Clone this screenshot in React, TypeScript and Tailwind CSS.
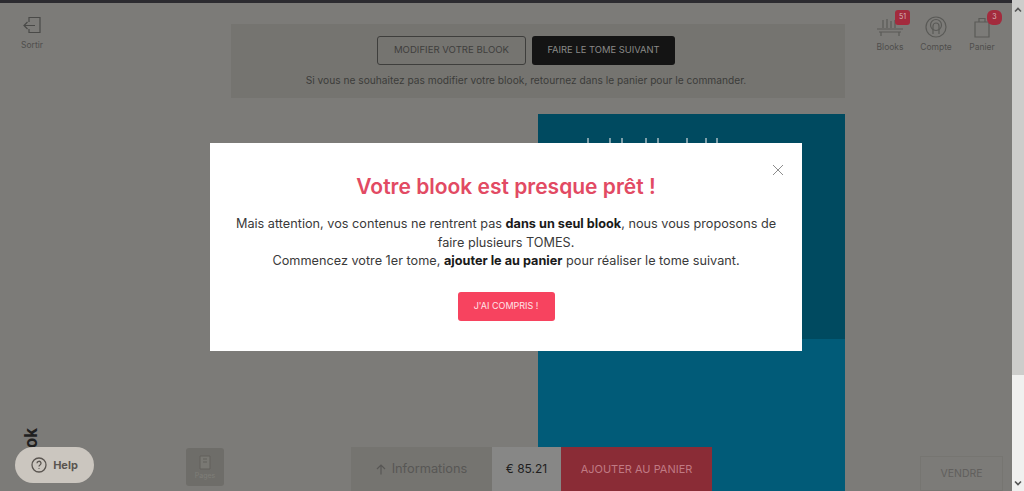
const font = { fontFamily: '"Inter", "Open Sans", sans-serif' };

function NavItem({ label, badge, round, children }: { label: string; badge: string | null; round?: boolean; children: React.ReactNode }) {
  return (
    <div className="relative flex w-[40px] flex-col items-center">
      <div className="flex h-[24px] items-center justify-center">{children}</div>
      <span className="mt-[3px] text-[8.5px] leading-[10px] text-[#4f4e4c]">{label}</span>
      {badge && (
        <span
          className={`absolute top-[-5px] right-[0px] flex h-[15px] w-[15px] items-center justify-center bg-[#a32b3d] text-[7px] text-[#d8b6ba] ${
            round ? "rounded-[6px]" : "rounded-[3px]"
          }`}
        >
          {badge}
        </span>
      )}
    </div>
  );
}

export default function App() {
  return (
    <div className="relative flex h-[491px] w-[1024px] overflow-hidden bg-[#7c7b78]" style={font}>
      <div className="flex min-w-0 flex-1 flex-col">
        <div className="h-[3px] bg-[#2c2b30]" />

        <div className="flex flex-1 flex-col">
          {/* Header */}
          <div className="flex items-start">
            <div className="flex w-[231px] pt-[13px] pl-[21px]">
              <div className="flex w-[22px] flex-col items-center">
                <svg width="22" height="20" viewBox="0 0 22 20" fill="none" stroke="#4a4a48" strokeWidth="1.2">
                  <path d="M8 6V1.5h11v15H8V13" />
                  <path d="M14 9.5H3M6.5 6 3 9.5 6.5 13" />
                </svg>
                <span className="mt-[4px] text-[8.5px] leading-[10px] text-[#4f4e4c]">Sortir</span>
              </div>
            </div>

            <div className="mt-[21px] flex h-[74px] w-[614px] flex-col items-center bg-[#757470] pt-[12px] pr-[24px]">
              <div className="flex gap-[6px]">
                <div className="flex h-[29px] w-[149px] items-center justify-center rounded-[3px] border border-[#3e3e3c] text-[9.6px] text-[#3f3e3d]">
                  MODIFIER VOTRE BLOOK
                </div>
                <div className="flex h-[29px] w-[143px] items-center justify-center rounded-[3px] bg-[#141414] text-[9.4px] text-[#8a8a88]">
                  FAIRE LE TOME SUIVANT
                </div>
              </div>
              <p className="mt-[9px] text-[10.2px] leading-[12px] text-[#3c3c3a]">
                Si vous ne souhaitez pas modifier votre blook, retournez dans le panier pour le commander.
              </p>
            </div>

            <div className="flex flex-1 justify-end gap-[6px] pt-[12px] pr-[10px]">
              <NavItem label="Blooks" badge="51">
                <svg width="28" height="22" viewBox="0 0 28 22" fill="none" stroke="#5a5a57" strokeWidth="1.2">
                  <path d="M1 13h26M3 16h22M5 16v4M23 16v4" />
                  <path d="M7 12V4M11 12V3M15 12V5M19 12V4" />
                </svg>
              </NavItem>
              <NavItem label="Compte" badge={null}>
                <svg width="22" height="22" viewBox="0 0 22 22" fill="none" stroke="#5a5a57" strokeWidth="1.2">
                  <circle cx="11" cy="11" r="10" />
                  <path d="M8 18V10a3 3 0 0 1 6 0v8" />
                  <circle cx="11" cy="9" r="5.5" />
                </svg>
              </NavItem>
              <NavItem label="Panier" badge="3" round>
                <svg width="18" height="22" viewBox="0 0 18 22" fill="none" stroke="#5a5a57" strokeWidth="1.2">
                  <path d="M2 6h14v15H2zM6 6V2.5h6V6" />
                </svg>
              </NavItem>
            </div>
          </div>

          {/* Book preview */}
          <div className="mt-[16px] ml-[538px] flex w-[307px] flex-1 flex-col">
            <div className="flex h-[225px] items-start bg-[#004a60] pt-[24px] pl-[49px]">
              <div className="h-[5px] w-[2px] bg-[#7fa0aa]" />
              <div className="ml-[20px] h-[5px] w-[2px] bg-[#7fa0aa]" />
              <div className="ml-[10px] h-[5px] w-[2px] bg-[#7fa0aa]" />
              <div className="ml-[22px] h-[5px] w-[2px] bg-[#7fa0aa]" />
              <div className="ml-[10px] h-[5px] w-[2px] bg-[#7fa0aa]" />
              <div className="ml-[27px] h-[5px] w-[2px] bg-[#7fa0aa]" />
              <div className="ml-[17px] h-[5px] w-[2px] bg-[#7fa0aa]" />
              <div className="ml-[9px] h-[5px] w-[2px] bg-[#7fa0aa]" />
            </div>
            <div className="flex-1 bg-[#015b78]" />
          </div>
        </div>
      </div>

      {/* Scrollbar */}
      <div className="flex w-[12px] flex-col justify-between bg-[#f0f0ef]">
        <div className="flex h-[375px] flex-col bg-[#cdcdcb] pt-[6px]">
          <svg width="12" height="8" viewBox="0 0 12 8" fill="none" stroke="#555" strokeWidth="1.6">
            <path d="M3 5.5 6 2.5l3 3" />
          </svg>
        </div>
        <svg className="mb-[4px]" width="12" height="8" viewBox="0 0 12 8" fill="none" stroke="#555" strokeWidth="1.6">
          <path d="M3 2.5 6 5.5l3-3" />
        </svg>
      </div>

      {/* Bottom items */}
      <span className="absolute top-[429px] left-[21px] rotate-[-90deg] text-[17px] leading-[18px] font-bold text-[#20201f]">
        ok
      </span>
      <div className="absolute top-[447px] left-[15px] flex h-[36px] w-[79px] items-center justify-center gap-[6px] rounded-full bg-[#cbc6bf] text-[11px] font-bold text-[#5a5550]">
        <svg width="16" height="16" viewBox="0 0 16 16" fill="none" stroke="#5a5550" strokeWidth="1.3">
          <circle cx="8" cy="8" r="7" />
          <path d="M6 6.3a2 2 0 1 1 3 1.7c-.7.4-1 .8-1 1.6M8 11.3v.8" />
        </svg>
        Help
      </div>
      <div className="absolute top-[448px] left-[186px] flex h-[38px] w-[38px] flex-col items-center justify-center rounded-[3px] bg-[#6e6d69]">
        <svg width="18" height="18" viewBox="0 0 18 18" fill="#797873" stroke="#62615d">
          <path d="M4 2h10v13H4zM7 5h4M7 8h4" />
        </svg>
        <span className="text-[7px] leading-[8px] text-[#7e7d78]">Pages</span>
      </div>

      <div className="absolute top-[447px] left-[351px] flex h-[44px] w-[361px]">
        <div className="flex w-[141px] items-center justify-center gap-[6px] bg-[#757470] text-[12.8px] text-[#585755]">
          <svg width="10" height="11" viewBox="0 0 10 11" fill="none" stroke="#585755" strokeWidth="1.2">
            <path d="M5 10.5V1M1 5l4-4 4 4" />
          </svg>
          Informations
        </div>
        <div className="flex w-[69px] items-center justify-center bg-[#878786] text-[12px] text-[#1e1e1e]">€ 85.21</div>
        <div className="flex flex-1 items-center justify-center bg-[#8a2c36] text-[11px] text-[#c07a84]">
          AJOUTER AU PANIER
        </div>
      </div>

      <div className="absolute top-[456px] left-[920px] flex h-[35px] w-[83px] items-center justify-center border border-[#767571] text-[10.5px] text-[#615f5d]">
        VENDRE
      </div>

      {/* Modal */}
      <div className="absolute top-[143px] left-[210px] flex h-[208px] w-[592px] flex-col items-center bg-white pt-[31px]">
        <svg className="absolute top-[21px] right-[18px]" width="12" height="12" viewBox="0 0 12 12" fill="none" stroke="#8d8d8d" strokeWidth="1">
          <path d="M1 1l10 10M11 1 1 11" />
        </svg>
        <h2 className="text-[21px] leading-[26px] font-semibold text-[#e24a63]">Votre blook est presque prêt !</h2>
        <p className="mt-[15px] w-[560px] text-center text-[12.7px] leading-[18.5px] text-[#3a3a3a]">
          Mais attention, vos contenus ne rentrent pas <b className="text-[#1a1a1a]">dans un seul blook</b>, nous vous proposons de faire plusieurs TOMES.
          <br />
          Commencez votre 1er tome, <b className="text-[#1a1a1a]">ajouter le au panier</b> pour réaliser le tome suivant.
        </p>
        <button className="mt-[21px] h-[29px] w-[97px] rounded-[3px] bg-[#f7435f] text-[9px] text-[#ffe4e8]">J'AI COMPRIS !</button>
      </div>
    </div>
  );
}
